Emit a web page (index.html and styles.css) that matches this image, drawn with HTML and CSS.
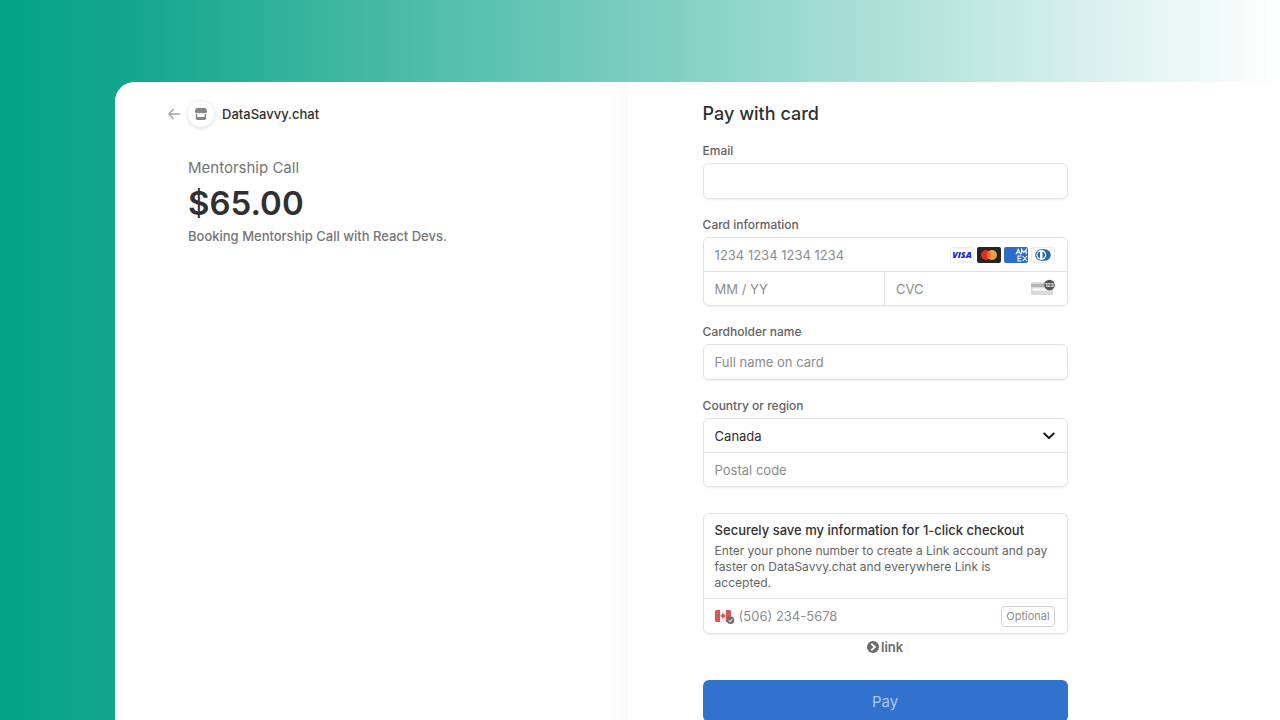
FILE: index.html
```html
<!DOCTYPE html>
<html lang="en">
<head>
<meta charset="utf-8">
<meta name="viewport" content="width=device-width, initial-scale=1">
<title>DataSavvy.chat checkout</title>
<link rel="stylesheet" href="styles.css">
</head>
<body>
<div class="panel">
  <section class="summary">
    <header class="merchant">
      <a class="back" href="#" aria-label="Back">
        <svg width="12" height="12" viewBox="0 0 12 12" fill="none" stroke="#a3a3a3" stroke-width="1.4" stroke-linecap="round" stroke-linejoin="round"><path d="M11.3 6H1M5.2 1.6 .9 6l4.3 4.4"/></svg>
      </a>
      <span class="store">
        <svg width="12" height="12" viewBox="0 0 12 12" fill="#868686"><path d="M1.6 0h8.8L12 2.6v1.2a1.6 1.6 0 0 1-2.900.8 1.8 1.8 0 0 1-3.100 0 1.800 1.800 0 0 1-3.100 0A1.600 1.600 0 0 1 0 3.800V2.600z"/><path d="M.8 6h1.500v3h7.400V6h1.500v4.600q0 1.400-1.400 1.400H2.200Q.8 12 .8 10.600z"/></svg>
      </span>
      <span class="merchant-name">DataSavvy.chat</span>
    </header>
    <div class="product">
      <p class="product-name">Mentorship Call</p>
      <p class="price">$65.00</p>
      <p class="product-note">Booking Mentorship Call with React Devs.</p>
    </div>
  </section>
  <main class="payment">
    <form class="form">
      <h1 class="title">Pay with card</h1>
      <div class="group">
        <label class="label" for="email">Email</label>
        <div class="box"><input class="input" id="email" type="email"></div>
      </div>
      <div class="group">
        <label class="label" for="number">Card information</label>
        <div class="box">
          <div class="row">
            <input class="input" id="number" type="text" placeholder="1234 1234 1234 1234">
            <span class="cards">
              <svg width="24" height="16" viewBox="0 0 24 16"><rect x=".5" y=".5" width="23" height="15" rx="1.5" fill="#fff" stroke="#ececef"/><text x="12" y="11.3" text-anchor="middle" class="visa">VISA</text></svg>
              <svg width="24" height="16" viewBox="0 0 24 16"><rect width="24" height="16" rx="2" fill="#252525"/><circle cx="9" cy="8" r="5" fill="#d9302b"/><circle cx="15" cy="8" r="5" fill="#eba341"/><path d="M12 4a5 5 0 0 1 0 8 5 5 0 0 1 0-8" fill="#ee6b2d"/></svg>
              <svg width="24" height="16" viewBox="0 0 24 16"><rect width="24" height="16" rx="2" fill="#2e6cc9"/><path d="M12 7.300l2.300-5 2.300 5M13 5.800h2.700M17.600 7.300v-5l2.300 3 2.300-3v5M17.500 9H14v5h3.500M14 11.500h3.300M18.600 9l4.600 5M23.200 9l-4.600 5" fill="none" stroke="#fff" stroke-width="1.100"/></svg>
              <svg width="24" height="16" viewBox="0 0 24 16"><rect x=".5" y=".5" width="23" height="15" rx="1.5" fill="#fff" stroke="#ececef"/><path d="M10 2.200h4a5.800 5.800 0 0 1 0 11.600h-4a5.800 5.800 0 0 1 0-11.600" fill="#2968a8"/><circle cx="10.300" cy="8" r="4.900" fill="#fff"/><path d="M9.100 4.400a3.800 3.800 0 0 0 0 7.200zM11.500 4.400a3.800 3.800 0 0 1 0 7.200z" fill="#2968a8"/></svg>
            </span>
          </div>
          <div class="row split">
            <input class="input" type="text" placeholder="MM / YY" aria-label="Expiry">
            <div class="cell">
              <input class="input" type="text" placeholder="CVC" aria-label="CVC">
              <svg class="cvc" width="24" height="20" viewBox="0 0 24 20"><rect y="3" width="22" height="13" rx="1.500" fill="#d9d9d9"/><path d="M0 5h22v3H0z" fill="#b5b5b5"/><path d="M1.500 9.500H17v2H1.500z" fill="#fff"/><circle cx="18.500" cy="6" r="5.300" fill="#545454"/><text x="18.500" y="8" text-anchor="middle" class="digits">123</text></svg>
            </div>
          </div>
        </div>
      </div>
      <div class="group">
        <label class="label" for="name">Cardholder name</label>
        <div class="box"><input class="input" id="name" type="text" placeholder="Full name on card"></div>
      </div>
      <div class="group">
        <label class="label" for="country">Country or region</label>
        <div class="box">
          <div class="row">
            <select class="input select" id="country"><option>Canada</option></select>
            <svg class="chevron" width="12" height="8" viewBox="0 0 12 8" fill="none" stroke="#111" stroke-width="1.900" stroke-linecap="round" stroke-linejoin="round"><path d="M1.300 1.500 6 6.200l4.700-4.700"/></svg>
          </div>
          <div class="row"><input class="input" type="text" placeholder="Postal code" aria-label="Postal code"></div>
        </div>
      </div>
      <div class="box save">
        <div class="save-copy">
          <h2 class="save-title">Securely save my information for 1-click checkout</h2>
          <p class="save-text">Enter your phone number to create a Link account and pay faster on DataSavvy.chat and everywhere Link is accepted.</p>
        </div>
        <div class="row phone">
          <svg class="flag" width="20" height="16" viewBox="0 0 20 16"><rect y="2" width="16" height="12" rx="1.500" fill="#f4f2f2"/><path d="M1.500 2H5v12H1.500Q0 14 0 12.500v-9Q0 2 1.500 2M11 2h3.500Q16 2 16 3.500v9q0 1.500-1.500 1.500H11z" fill="#d8584f"/><path d="M8 4.800l.8 1.500.6-.2-.1 1 1.200-.1-.4 1 .3.500-2 1.200v1.300h-.8V9.700l-2-1.200.3-.5-.4-1 1.200.1-.1-1 .6.200z" fill="#d8584f"/><circle cx="15.500" cy="12.300" r="3.700" fill="#6b6b6b"/><path d="M13.800 12.300l1.400 1.300 2.200-2.500" stroke="#ddd" stroke-width="1.200" fill="none"/></svg>
          <input class="input" type="tel" placeholder="(506) 234-5678" aria-label="Phone number">
          <span class="optional">Optional</span>
        </div>
      </div>
      <a class="link" href="#">
        <svg width="12" height="12" viewBox="0 0 12 12"><circle cx="6" cy="6" r="6" fill="#6b6b6b"/><path d="M4.300 2.800 7.900 6 4.300 9.200" stroke="#fff" stroke-width="1.900" fill="none"/></svg>
        <span>link</span>
      </a>
      <button class="pay" type="submit">Pay</button>
    </form>
  </main>
</div>
</body>
</html>
```
FILE: styles.css
```css
* { box-sizing: border-box; }
body {
  margin: 0;
  min-height: 100vh;
  overflow: hidden;
  padding: 82px 0 0 115px;
  background: linear-gradient(90deg, #05a388 0, #12a68d 10%, #fff 100%);
  font-family: Inter, "Liberation Sans", sans-serif;
  color: #303030;
}
h1, h2, p { margin: 0; }
.panel {
  display: grid;
  grid-template-columns: 44% 56%;
  height: calc(100vh - 82px);
  overflow: hidden;
  background: #fff;
  border-top-left-radius: 20px;
}
.summary {
  padding: 18px 53px 0;
  background: linear-gradient(270deg, #fafafa 0, #fff 20px);
}
.merchant { display: flex; align-items: center; height: 28px; }
.back { display: flex; width: 20px; }
.store {
  display: grid;
  place-items: center;
  width: 26px;
  height: 26px;
  border-radius: 50%;
  box-shadow: 0 1px 4px rgba(0, 0, 0, .16);
}
.merchant-name { margin-left: 8px; font-size: 13px; font-weight: 500; }
.product { padding: 30px 0 0 20px; }
.product-name { font-size: 15px; line-height: 20px; color: #757575; font-weight: 400; }
.price { font-size: 33px; line-height: 50px; font-weight: 600; }
.product-note { font-size: 13px; line-height: 16px; font-weight: 500; color: #757575; }
.payment { padding: 20px 75px 0; }
.form { max-width: 365px; display: flex; flex-direction: column; }
.title { margin-bottom: 16px; font-size: 18px; line-height: 24px; font-weight: 500; }
.group { display: flex; flex-direction: column; gap: 3px; margin-bottom: 17px; }
.label { font-size: 12px; line-height: 18px; font-weight: 500; color: #626262; }
.box {
  border: 1px solid #e2e2e2;
  border-radius: 6px;
  box-shadow: 0 1px 2px rgba(0, 0, 0, .07);
  overflow: hidden;
}
.row { display: flex; align-items: center; padding-right: 12px; }
.row + .row, .phone { border-top: 1px solid #e2e2e2; }
.input {
  display: block;
  width: 100%;
  min-width: 0;
  height: 34px;
  padding: 0 0 0 11px;
  border: 0;
  outline: 0;
  background: transparent;
  font-family: inherit;
  font-size: 13px;
  color: #303030;
}
.row .input { height: 33px; }
.input::placeholder { color: #8c8c8c; opacity: 1; }
.cards { display: flex; gap: 3px; }
.visa { font: italic 800 9px "Open Sans", sans-serif; fill: #1a1fc8; }
.digits { font: 700 5px Inter, sans-serif; fill: #fff; }
.split > .input, .cell { flex: 1; }
.cell { display: flex; align-items: center; border-left: 1px solid #e2e2e2; }
.cvc { flex: none; }
.select { appearance: none; }
.chevron { flex: none; }
.save { margin-top: 9px; }
.save-copy { padding: 8px 11px 7px; }
.save-title { font-size: 13px; line-height: 17px; font-weight: 500; }
.save-text { margin-top: 4px; padding-right: 6px; font-size: 12px; line-height: 16px; color: #656565; }
.phone { padding-left: 11px; }
.flag { flex: none; }
.phone .input { height: 34px; padding-left: 4px; }
.optional {
  padding: 1px 4px;
  border: 1px solid #d0d0d0;
  border-radius: 4px;
  font-size: 11px;
  line-height: 17px;
  color: #8c8c8c;
}
.link {
  display: flex;
  align-self: center;
  align-items: center;
  gap: 2px;
  margin: 4px 0 24px;
  font-size: 13px;
  line-height: 18px;
  font-weight: 600;
  color: #6b6b6b;
  text-decoration: none;
}
.pay {
  height: 42px;
  border: 0;
  border-radius: 6px;
  background: #3072cd;
  font-family: inherit;
  font-size: 15px;
  color: #a9c8f0;
}
```
